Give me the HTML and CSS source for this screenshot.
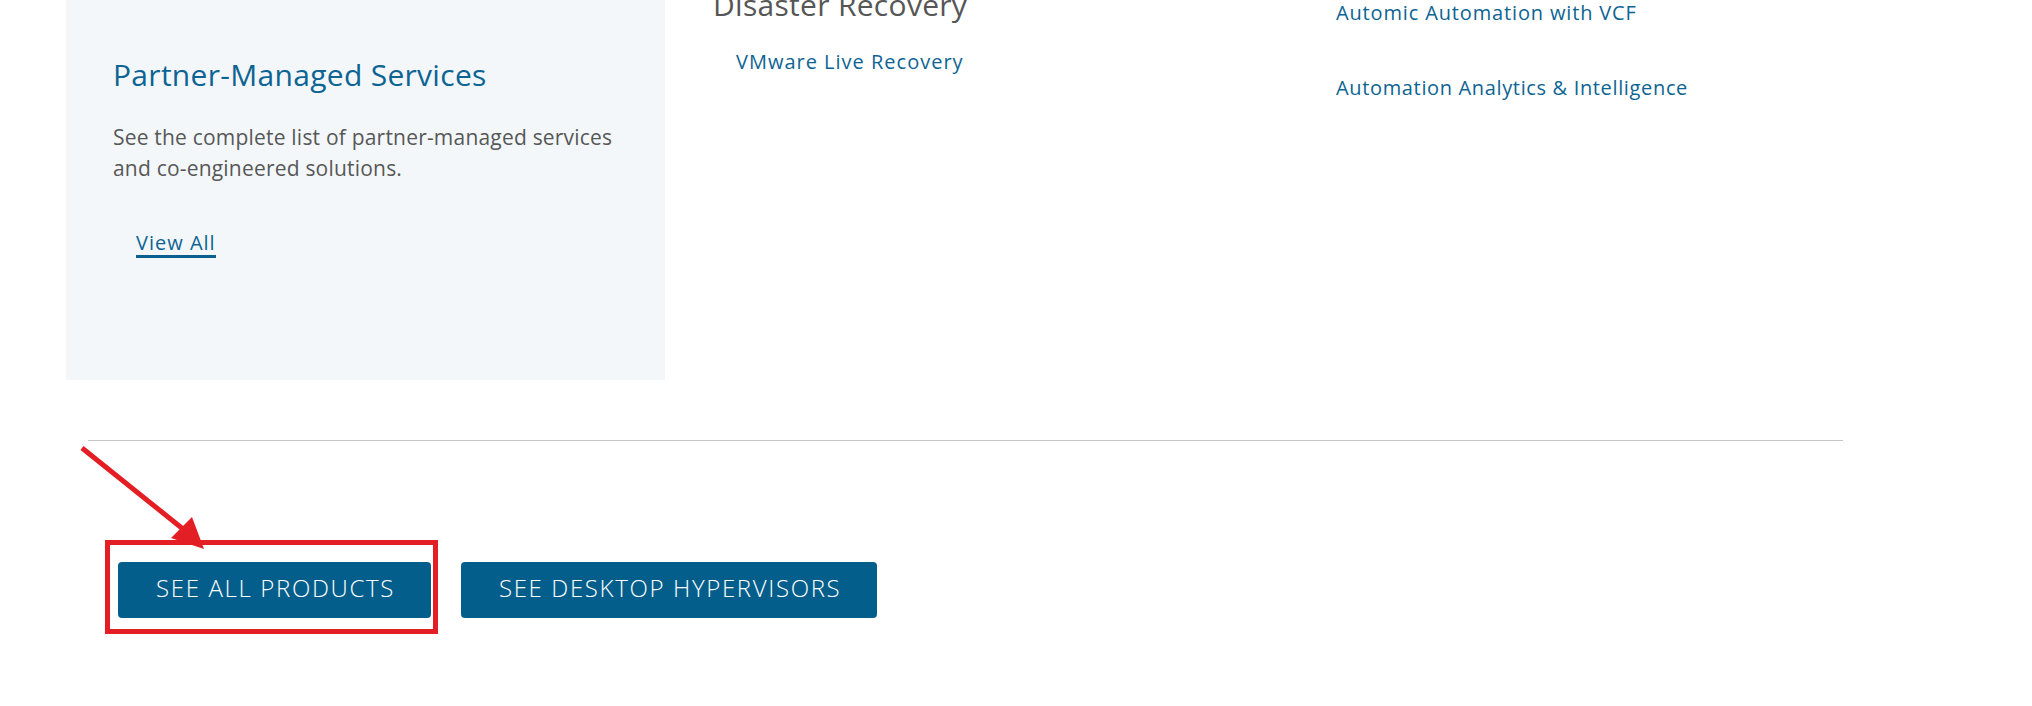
FILE: index.html
```html
<!DOCTYPE html>
<html lang="en">
<head>
<meta charset="utf-8">
<title>Products</title>
<link rel="stylesheet" href="styles.css">
</head>
<body>
<div class="page">
  <section class="menu-row">
    <div class="card">
      <h3 class="card-title">Partner-Managed Services</h3>
      <p class="card-text">See the complete list of partner-managed services and co-engineered solutions.</p>
      <a class="view-all" href="#">View All</a>
    </div>
    <div class="col col-mid">
      <h4 class="col-heading">Disaster Recovery</h4>
      <ul class="links">
        <li><a href="#">VMware Live Recovery</a></li>
      </ul>
    </div>
    <div class="col col-right">
      <ul class="links links-spaced">
        <li><a href="#">Automic Automation with VCF</a></li>
        <li><a class="link-tight" href="#">Automation Analytics &amp; Intelligence</a></li>
      </ul>
    </div>
  </section>
  <section class="footer-row">
    <hr class="divider">
    <div class="buttons">
      <a class="btn" href="#">SEE ALL PRODUCTS</a>
      <a class="btn" href="#">SEE DESKTOP HYPERVISORS</a>
    </div>
  </section>
</div>
<svg class="annotation" width="2032" height="706" viewBox="0 0 2032 706" aria-hidden="true">
  <rect x="107.5" y="542.5" width="328" height="89" fill="none" stroke="#e31e24" stroke-width="5"/>
  <line x1="82" y1="448" x2="183" y2="529" stroke="#e31e24" stroke-width="5"/>
  <polygon points="171,538 192,517 204,549" fill="#e31e24"/>
</svg>
</body>
</html>
```
FILE: styles.css
```css
* { box-sizing: border-box; }
html, body { margin: 0; padding: 0; }
body {
  background: #ffffff;
  font-family: "Open Sans", "Liberation Sans", sans-serif;
  width: 2032px;
  height: 706px;
  overflow: hidden;
  position: relative;
}
.page { width: 2032px; }

.menu-row {
  display: grid;
  grid-template-columns: 599px 599px 599px;
  column-gap: 24px;
  padding-left: 66px;
  align-items: start;
}

.card {
  background: #f3f7fa;
  padding: 57px 47px 0 47px;
  height: 380px;
}
.card-title {
  margin: 0;
  font-size: 30px;
  line-height: 36px;
  font-weight: 400;
  letter-spacing: 0.3px;
  color: #0d6493;
}
.card-text {
  margin: 29px 0 0 0;
  font-size: 21px;
  line-height: 31px;
  letter-spacing: 0.2px;
  color: #575757;
}
.view-all {
  display: inline-block;
  margin: 47px 0 0 23px;
  font-size: 20px;
  line-height: 24px;
  letter-spacing: 1px;
  color: #0d6493;
  text-decoration: none;
  border-bottom: 3px solid #0a5f8e;
}

.col-mid { padding-left: 24px; margin-top: -13px; }
.col-right { padding-left: 24px; margin-top: -1px; }

.col-heading {
  margin: 0 0 25px 0;
  font-size: 30px;
  line-height: 36px;
  font-weight: 400;
  letter-spacing: 0.3px;
  color: #565656;
}
.links {
  list-style: none;
  margin: 0;
  padding: 0;
}
.col-mid .links { padding-left: 23px; }
.links li {
  font-size: 20px;
  line-height: 28px;
}
.links-spaced { display: flex; flex-direction: column; gap: 47px; }
.links a {
  color: #0d6493;
  text-decoration: none;
  letter-spacing: 0.85px;
}
.links a.link-tight { letter-spacing: 0.65px; }
.col-mid .links a { letter-spacing: 1px; }

.footer-row {
  padding: 60px 0 0 88px;
}
.divider {
  margin: 0;
  width: 1755px;
  border: 0;
  border-top: 1px solid #c6c6c6;
}
.buttons {
  display: flex;
  gap: 30px;
  padding: 121px 0 0 30px;
}
.btn {
  display: flex;
  align-items: center;
  justify-content: center;
  height: 56px;
  padding: 0 36px 5px 38px;
  background: #035e8c;
  color: #ffffff;
  border-radius: 4px;
  font-size: 24px;
  font-weight: 300;
  letter-spacing: 1.65px;
  text-decoration: none;
}

.annotation {
  position: absolute;
  left: 0;
  top: 0;
  pointer-events: none;
}
```
